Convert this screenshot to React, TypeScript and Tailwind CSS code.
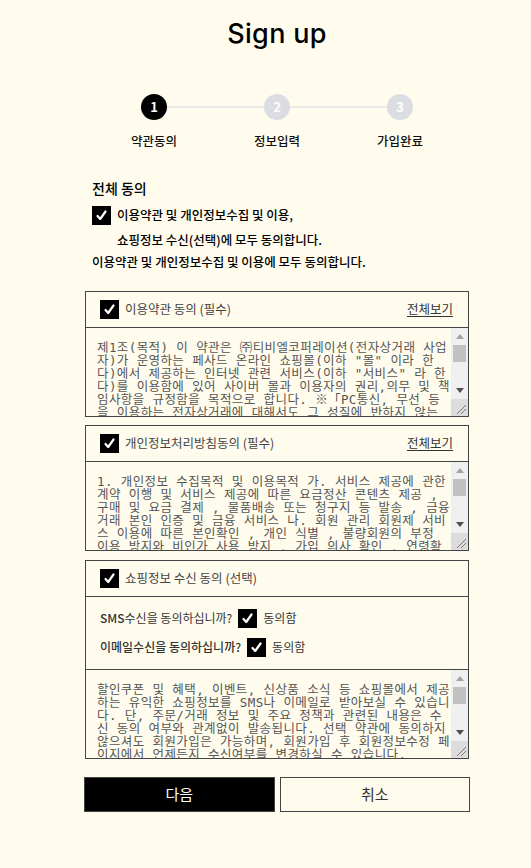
import React from 'react'

const terms =
  '제1조(목적) 이 약관은 ㈜티비엘코퍼레이션(전자상거래 사업자)가 운영하는 페사드 온라인 쇼핑몰(이하 "몰" 이라 한다)에서 제공하는 인터넷 관련 서비스(이하 "서비스" 라 한다)를 이용함에 있어 사이버 몰과 이용자의 권리,의무 및 책임사항을 규정함을 목적으로 합니다. ※「PC통신, 무선 등을 이용하는 전자상거래에 대해서도 그 성질에 반하지 않는 한 이 약관을 준용합니다.」'

const privacy =
  '1. 개인정보 수집목적 및 이용목적 가. 서비스 제공에 관한 계약 이행 및 서비스 제공에 따른 요금정산 콘텐츠 제공 , 구매 및 요금 결제 , 물품배송 또는 청구지 등 발송 , 금융거래 본인 인증 및 금융 서비스 나. 회원 관리 회원제 서비스 이용에 따른 본인확인 , 개인 식별 , 불량회원의 부정 이용 방지와 비인가 사용 방지 , 가입 의사 확인 , 연령확인'

const shopping =
  '할인쿠폰 및 혜택, 이벤트, 신상품 소식 등 쇼핑몰에서 제공하는 유익한 쇼핑정보를 SMS나 이메일로 받아보실 수 있습니다. 단, 주문/거래 정보 및 주요 정책과 관련된 내용은 수신 동의 여부와 관계없이 발송됩니다. 선택 약관에 동의하지 않으셔도 회원가입은 가능하며, 회원가입 후 회원정보수정 페이지에서 언제든지 수신여부를 변경하실 수 있습니다.'

function Check() {
  return (
    <span className="inline-flex h-[19px] w-[19px] shrink-0 items-center justify-center bg-black">
      <svg width="13" height="13" viewBox="0 0 13 13" fill="none">
        <path d="M2.5 7 L5.2 10 L10.5 2.5" stroke="white" strokeWidth="2.2" strokeLinecap="round" strokeLinejoin="round" />
      </svg>
    </span>
  )
}

function Step({ n, label, active }: { n: number; label: string; active?: boolean }) {
  return (
    <div className="relative flex w-[60px] flex-col items-center">
      <div
        className={`flex h-[26px] w-[26px] items-center justify-center rounded-full text-[13px] font-bold text-white ${
          active ? 'bg-black' : 'bg-[#dcdde2]'
        }`}
      >
        {n}
      </div>
      <div className="mt-[12px] whitespace-nowrap text-[12.5px] font-medium text-[#111]">{label}</div>
    </div>
  )
}

// classic scrollbar with resize grip, as the browser draws it beside a textarea
function FakeScrollbar() {
  return (
    <div className="flex w-[17px] shrink-0 flex-col bg-[#f0f0f0]">
      <div className="flex h-[17px] items-center justify-center">
        <svg width="8" height="5" viewBox="0 0 8 5">
          <path d="M0 5 L4 0 L8 5 Z" fill="#a3a3a3" />
        </svg>
      </div>
      <div className="mx-[2px] h-[17px] bg-[#c1c1c1]" />
      <div className="flex-1" />
      <div className="flex h-[17px] items-center justify-center">
        <svg width="8" height="5" viewBox="0 0 8 5">
          <path d="M0 0 L8 0 L4 5 Z" fill="#505050" />
        </svg>
      </div>
      <div className="flex h-[17px] items-end justify-end bg-[#dcdcdc] p-[2px]">
        <svg width="10" height="10" viewBox="0 0 10 10">
          <path d="M1 10 L10 1 M5 10 L10 5" stroke="#777" strokeWidth="1" />
        </svg>
      </div>
    </div>
  )
}

function TermsText({ text }: { text: string }) {
  return (
    <div className="flex h-[88px]">
      <div className="flex-1 overflow-hidden pl-[11px] pr-0 pt-[13px] font-['DejaVu_Sans_Mono','Noto_Sans_CJK_KR',monospace] text-[12.5px] leading-[13px] tracking-[0.4px] text-[#555]">
        {text}
      </div>
      <FakeScrollbar />
    </div>
  )
}

function AgreeBox({ title, text }: { title: string; text: string }) {
  return (
    <div className="border border-[#444]">
      <div className="flex h-[36px] items-center justify-between border-b border-[#444] pl-[14px] pr-[15px]">
        <div className="flex items-center gap-[6px]">
          <Check />
          <span className="text-[12.5px] text-[#444]">{title}</span>
        </div>
        <span className="text-[12.5px] text-[#333] underline underline-offset-2">전체보기</span>
      </div>
      <TermsText text={text} />
    </div>
  )
}

export default function App() {
  return (
    <div className="min-h-[868px] bg-[#fffcee] font-['Noto_Sans_CJK_KR','Noto_Sans',sans-serif] text-black">
      <div className="ml-[85px] w-[384px] pt-[14px]">
        <h1 className="text-center font-['Inter',sans-serif] text-[27px] font-medium leading-[40px] tracking-[0.3px]">
          Sign up
        </h1>

        {/* stepper */}
        <div className="relative mx-auto mt-[40px] flex w-[306px] justify-between">
          <div className="absolute left-[30px] right-[30px] top-[12px] h-[2px] bg-[#e9e9e9]" />
          <Step n={1} label="약관동의" active />
          <Step n={2} label="정보입력" />
          <Step n={3} label="가입완료" />
        </div>

        {/* all agree */}
        <div className="mt-[27px] pl-[7px]">
          <div className="text-[14px] font-medium leading-[20px]">전체 동의</div>
          <div className="mt-[8px] flex items-center gap-[6px]">
            <Check />
            <span className="text-[12.5px] font-medium">이용약관 및 개인정보수집 및 이용,</span>
          </div>
          <div className="mt-[6px] pl-[25px] text-[12.5px] font-medium leading-[18px]">
            쇼핑정보 수신(선택)에 모두 동의합니다.
          </div>
          <div className="mt-[4px] text-[12.5px] font-medium leading-[18px]">
            이용약관 및 개인정보수집 및 이용에 모두 동의합니다.
          </div>
        </div>

        <div className="mt-[20px] flex flex-col gap-[8px]">
          <AgreeBox title="이용약관 동의 (필수)" text={terms} />
          <AgreeBox title="개인정보처리방침동의 (필수)" text={privacy} />
          <div className="mt-[1px] border border-[#444]">
            <div className="flex h-[36px] items-center border-b border-[#444] pl-[14px]">
              <div className="flex items-center gap-[6px]">
                <Check />
                <span className="text-[12.5px] text-[#444]">쇼핑정보 수신 동의 (선택)</span>
              </div>
            </div>
            <div className="flex flex-col gap-[10px] border-b border-[#444] px-[14px] py-[12px]">
              <div className="flex items-center gap-[6px] text-[12px] text-[#333]">
                <span>
                  <b className="font-medium">SMS</b>수신을 동의하십니까?
                </span>
                <Check />
                <span>동의함</span>
              </div>
              <div className="flex items-center gap-[6px] text-[12px] text-[#333]">
                <span className="font-medium">이메일수신을 동의하십니까?</span>
                <Check />
                <span>동의함</span>
              </div>
            </div>
            <TermsText text={shopping} />
          </div>
        </div>

        <div className="-ml-[1px] mt-[18px] flex w-[386px] gap-[5px]">
          <button className="h-[35px] flex-1 border border-[#444] bg-black text-[15px] text-white">다음</button>
          <button className="h-[35px] flex-1 border border-[#444] bg-transparent text-[15px] text-[#333]">취소</button>
        </div>
      </div>
    </div>
  )
}
